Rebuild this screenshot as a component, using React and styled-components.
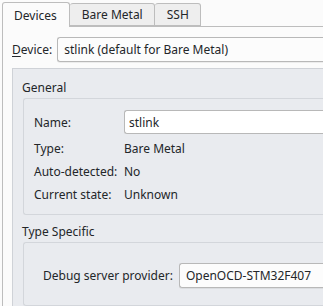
import React from 'react';
import styled, { createGlobalStyle } from 'styled-components';

const GlobalStyle = createGlobalStyle`
  html, body {
    margin: 0;
    padding: 0;
    background: #fbfbfb;
    overflow: hidden;
  }
  body {
    font-family: "Noto Sans", "Open Sans", sans-serif;
    font-size: 12px;
    color: #232629;
  }
`;

const Window = styled.div`
  width: 100vw;
  height: 100vh;
  overflow: hidden;
  padding: 2px 0 0 2px;
  box-sizing: border-box;
  display: flex;
  flex-direction: column;
`;

const TabBar = styled.div`
  display: flex;
  align-items: flex-end;
  height: 24px;
  position: relative;
  z-index: 1;
`;

const Tab = styled.div`
  box-sizing: border-box;
  height: ${props => (props.active ? '25px' : '23px')};
  margin-bottom: ${props => (props.active ? '-1px' : '0')};
  padding: ${props => (props.active ? '0 12px 0 11px' : '0 11px 0 12px')};
  display: flex;
  align-items: center;
  background: ${props => (props.active ? '#fbfbfb' : '#eeeeee')};
  border: 1px solid #bdbdbd;
  border-bottom: ${props => (props.active ? 'none' : '1px solid #bdbdbd')};
  border-left: ${props => (props.first ? '1px solid #bdbdbd' : 'none')};
  border-radius: 3px 3px 0 0;
  line-height: 17px;
`;

const Pane = styled.div`
  flex: 1;
  border-top: 1px solid #bdbdbd;
  border-left: 1px solid #bdbdbd;
  padding: 10px 0 0 9px;
  display: flex;
  flex-direction: column;
  min-height: 0;
`;

const DeviceRow = styled.div`
  display: flex;
  align-items: center;
  gap: 5px;
`;

const Mnemonic = styled.span`
  text-decoration: underline;
  text-underline-offset: 2px;
`;

const Combo = styled.div`
  box-sizing: border-box;
  flex: 1;
  min-width: 0;
  height: 25px;
  padding: 0 6px;
  display: flex;
  align-items: center;
  background: #fcfcfc;
  border: 1px solid #b8b8b8;
  border-right: none;
  border-radius: 3px 0 0 3px;
  box-shadow: 0 1px 0 rgba(0, 0, 0, 0.06);
  white-space: nowrap;
  overflow: hidden;
`;

const Panel = styled.div`
  flex: 1;
  margin-top: 6px;
  box-sizing: border-box;
  background: #e9ebef;
  border: 1px solid #cfd2d7;
  border-right: none;
  border-bottom: none;
  padding: 10px 0 0 9px;
  display: flex;
  flex-direction: column;
`;

const GroupTitle = styled.div`
  line-height: 17px;
  margin-bottom: 2px;
`;

const Group = styled.div`
  box-sizing: border-box;
  border: 1px solid #d3d6db;
  border-right: none;
  border-radius: 3px 0 0 3px;
  margin: 0 0 ${props => props.gap || 0}px 1px;
  padding: ${props => props.pad};
  flex: ${props => (props.grow ? 1 : 'none')};
`;

const Form = styled.div`
  display: grid;
  grid-template-columns: 90px 1fr;
  row-gap: 6px;
  align-items: center;
  line-height: 17px;
`;

const Field = styled.div`
  box-sizing: border-box;
  height: 24px;
  padding: 0 4px;
  display: flex;
  align-items: center;
  background: #ffffff;
  border: 1px solid #b8b8b8;
  border-right: none;
  border-radius: 3px 0 0 3px;
`;

const ProviderRow = styled.div`
  display: flex;
  align-items: center;
  gap: 6px;
`;

export default function App() {
  return (
    <>
      <GlobalStyle />
      <Window>
        <TabBar>
          <Tab active first>Devices</Tab>
          <Tab>Bare Metal</Tab>
          <Tab>SSH</Tab>
        </TabBar>
        <Pane>
          <DeviceRow>
            <span><Mnemonic>D</Mnemonic>evice:</span>
            <Combo>stlink (default for Bare Metal)</Combo>
          </DeviceRow>
          <Panel>
            <GroupTitle>General</GroupTitle>
            <Group pad="11px 0 11px 10px" gap={8}>
              <Form>
                <span>Name:</span>
                <Field>stlink</Field>
                <span>Type:</span>
                <span>Bare Metal</span>
                <span>Auto-detected:</span>
                <span>No</span>
                <span>Current state:</span>
                <span>Unknown</span>
              </Form>
            </Group>
            <GroupTitle>Type Specific</GroupTitle>
            <Group pad="20px 0 0 19px" grow>
              <ProviderRow>
                <span>Debug server provider:</span>
                <Combo>OpenOCD-STM32F407</Combo>
              </ProviderRow>
            </Group>
          </Panel>
        </Pane>
      </Window>
    </>
  );
}
